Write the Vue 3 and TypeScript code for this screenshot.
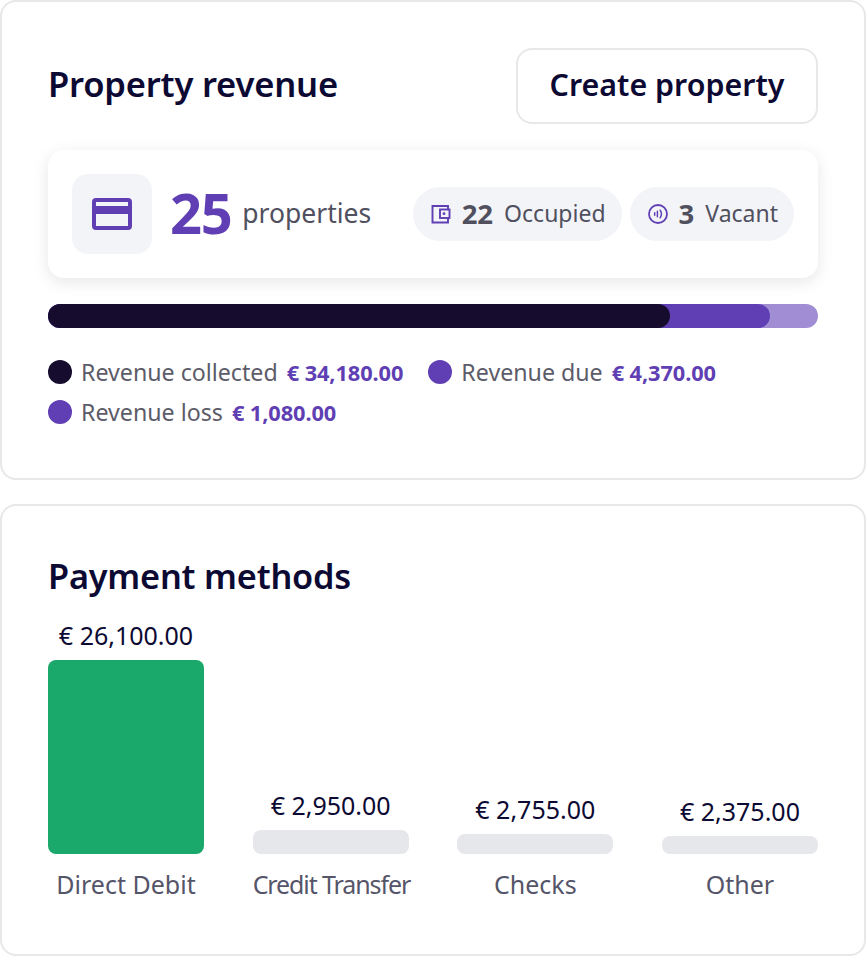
<template>
  <div class="page">
    <section class="card revenue">
      <div class="head">
        <h2>Property revenue</h2>
        <button class="create">Create property</button>
      </div>

      <div class="summary">
        <div class="icon-box">
          <svg width="40" height="32" viewBox="0 0 40 32">
            <path
              fill="#5f3fb3"
              fill-rule="evenodd"
              d="M4 0h32a4 4 0 0 1 4 4v24a4 4 0 0 1-4 4H4a4 4 0 0 1-4-4V4a4 4 0 0 1 4-4zM4 4v4h32V4zM4 16v12h32V16z"
            />
          </svg>
        </div>
        <span class="count">25</span>
        <span class="count-label">properties</span>
        <div class="pills">
          <div class="pill">
            <svg width="20" height="20" viewBox="0 0 20 20" fill="none">
              <path d="M17 5.5V2H1.5v16.5H17V14" stroke="#5f3fb3" stroke-width="1.9" />
              <rect x="9" y="5.5" width="9.5" height="8.5" stroke="#5f3fb3" stroke-width="1.9" />
              <circle cx="13" cy="9.7" r="1.4" fill="#5f3fb3" />
            </svg>
            <b>22</b>
            <span>Occupied</span>
          </div>
          <div class="pill">
            <svg width="20" height="20" viewBox="0 0 20 20" fill="none">
              <circle cx="10" cy="10" r="9" stroke="#5f3fb3" stroke-width="1.8" />
              <path d="M6.7 8.8v2.4M9.4 7.2v5.6M12.2 6.2c1.5 2.3 1.5 5.3 0 7.6" stroke="#5f3fb3" stroke-width="1.5" stroke-linecap="round" />
            </svg>
            <b>3</b>
            <span>Vacant</span>
          </div>
        </div>
      </div>

      <div class="bar">
        <div class="seg light"></div>
        <div class="seg mid"></div>
        <div class="seg dark"></div>
      </div>

      <div class="legend">
        <div v-for="item in legend" :key="item.label" class="legend-item">
          <i class="dot" :class="item.tone"></i>
          <span class="legend-label">{{ item.label }}</span>
          <b>{{ item.value }}</b>
        </div>
      </div>
    </section>

    <section class="card methods">
      <h2>Payment methods</h2>
      <div class="chart">
        <div v-for="m in methods" :key="m.label" class="col">
          <div class="amount">{{ m.amount }}</div>
          <div class="col-bar" :class="{ top: m.top }" :style="{ height: m.height + 'px' }"></div>
          <div class="col-label" :class="{ tight: m.tight }">{{ m.label }}</div>
        </div>
      </div>
    </section>
  </div>
</template>

<script setup lang="ts">
const legend = [
  { label: 'Revenue collected', value: '€ 34,180.00', tone: 'ink' },
  { label: 'Revenue due', value: '€ 4,370.00', tone: 'violet' },
  { label: 'Revenue loss', value: '€ 1,080.00', tone: 'violet' }
]

const methods = [
  { label: 'Direct Debit', amount: '€ 26,100.00', height: 194, top: true, tight: false },
  { label: 'Credit Transfer', amount: '€ 2,950.00', height: 24, top: false, tight: true },
  { label: 'Checks', amount: '€ 2,755.00', height: 20, top: false, tight: false },
  { label: 'Other', amount: '€ 2,375.00', height: 18, top: false, tight: false }
]
</script>

<style>
html,
body {
  background: #fff;
}
</style>

<style scoped>
.page {
  width: 866px;
  height: 956px;
  box-sizing: border-box;
  display: flex;
  flex-direction: column;
  gap: 24px;
  font-family: "Noto Sans", "Open Sans", sans-serif;
  color: #0c0a33;
  overflow: hidden;
}

.card {
  box-sizing: border-box;
  border: 2px solid #e8e8ea;
  border-radius: 16px;
  background: #fff;
  padding: 46px;
}

.revenue {
  height: 480px;
}

.methods {
  height: 452px;
  padding-top: 48px;
}

h2 {
  margin: 0;
  font-size: 34.3px;
  line-height: 44px;
  font-weight: 600;
  letter-spacing: -0.2px;
}

.head {
  display: flex;
  justify-content: space-between;
  align-items: center;
}

.head h2 {
  margin-top: -4px;
  font-size: 34.6px;
}

.create {
  box-sizing: border-box;
  width: 302px;
  height: 76px;
  padding: 0 0 4px;
  border: 2px solid #e8e8ea;
  border-radius: 16px;
  background: #fff;
  font: 600 30.4px "Noto Sans", sans-serif;
  color: #0c0a33;
}

.summary {
  box-sizing: border-box;
  height: 128px;
  margin-top: 26px;
  padding: 0 24px;
  display: flex;
  align-items: center;
  border-radius: 16px;
  background: #fff;
  box-shadow: 0 4px 16px rgba(20, 20, 50, 0.1);
}

.icon-box {
  width: 80px;
  height: 80px;
  border-radius: 16px;
  background: #f3f4f8;
  display: flex;
  align-items: center;
  justify-content: center;
  flex: none;
}

.count {
  margin-left: 18px;
  margin-top: -4px;
  font-size: 56px;
  line-height: 64px;
  font-weight: 700;
  color: #5f3fb3;
  letter-spacing: -1.4px;
}

.count-label {
  margin-left: 11px;
  margin-top: -2px;
  font-size: 26.5px;
  color: #50505f;
}

.pills {
  margin-left: auto;
  display: flex;
  gap: 8px;
}

.pill {
  box-sizing: border-box;
  height: 54px;
  padding: 0 16px 2px 18px;
  display: flex;
  align-items: center;
  gap: 11px;
  border-radius: 27px;
  background: #f3f4f8;
  font-size: 23px;
  color: #50505f;
}

.pill svg {
  margin-top: 2px;
}

.pill b {
  font-size: 27.5px;
  font-weight: 700;
}

.bar {
  position: relative;
  height: 24px;
  margin-top: 26px;
}

.seg {
  position: absolute;
  left: 0;
  top: 0;
  bottom: 0;
  border-radius: 12px;
}

.dark {
  width: 622px;
  background: #160c2e;
}

.mid {
  width: 722px;
  background: #5f3fb3;
}

.light {
  width: 100%;
  background: #a08dd4;
}

.legend {
  margin-top: 32px;
  display: flex;
  flex-wrap: wrap;
  column-gap: 25px;
  row-gap: 16px;
}

.legend-item {
  display: flex;
  align-items: center;
  height: 24px;
  font-size: 21.8px;
  white-space: nowrap;
}

.dot {
  width: 24px;
  height: 24px;
  border-radius: 50%;
  margin-right: 9px;
}

.ink {
  background: #160c2e;
}

.violet {
  background: #5f3fb3;
}

.legend-label {
  color: #5c5c69;
  margin-right: 9px;
  font-size: 23.2px;
}

.legend-item b {
  color: #5f3fb3;
  font-weight: 700;
  letter-spacing: -0.1px;
}

.chart {
  margin-top: 21px;
  display: grid;
  grid-template-columns: repeat(4, 156px);
  justify-content: space-between;
  align-items: end;
}

.col {
  display: flex;
  flex-direction: column;
  align-items: stretch;
  text-align: center;
}

.amount {
  font-size: 25px;
  line-height: 32px;
  margin-bottom: 9px;
  white-space: nowrap;
}

.col-bar {
  border-radius: 8px;
  background: #e6e7ea;
}

.col-bar.top {
  background: #1aa96b;
}

.col-label {
  margin-top: 14px;
  height: 32px;
  line-height: 32px;
  font-size: 25px;
  color: #55556a;
  white-space: nowrap;
}

.col-label.tight {
  letter-spacing: -1.1px;
}
</style>
